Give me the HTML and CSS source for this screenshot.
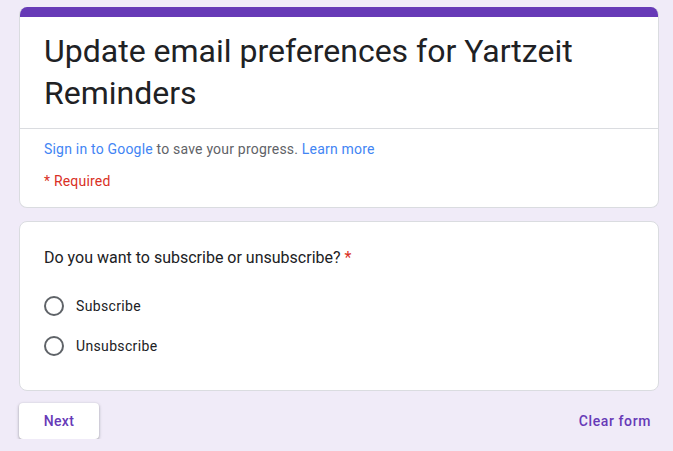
FILE: index.html
```html
<!DOCTYPE html>
<html>
<head>
<meta charset="utf-8">
<link rel="stylesheet" href="styles.css">
</head>
<body>
<div class="page">
  <div class="card header-card">
    <div class="bar"></div>
    <div class="title-wrap">
      <h1 class="title">Update email preferences for Yartzeit Reminders</h1>
    </div>
    <div class="info">
      <div class="signin"><a class="link">Sign in to Google</a> to save your progress. <a class="link">Learn more</a></div>
      <div class="required">* Required</div>
    </div>
  </div>
  <div class="card question-card">
    <div class="question">Do you want to subscribe or unsubscribe? <span class="star">*</span></div>
    <div class="options">
      <div class="option"><span class="radio"></span><span class="label">Subscribe</span></div>
      <div class="option"><span class="radio"></span><span class="label">Unsubscribe</span></div>
    </div>
  </div>
  <div class="actions">
    <button class="next">Next</button>
    <span class="clear">Clear form</span>
  </div>
</div>
</body>
</html>
```
FILE: styles.css
```css
html, body {
  margin: 0;
  padding: 0;
  background: #f0ebf8;
  font-family: Roboto, "Noto Sans", Arial, sans-serif;
  color: #202124;
}
.page {
  width: 640px;
  margin-left: 19px;
  padding-top: 7px;
}
.card {
  background: #fff;
  border: 1px solid #dadce0;
  border-radius: 8px;
  box-sizing: border-box;
}
.header-card {
  border-top: none;
  overflow: hidden;
}
.bar {
  height: 10px;
  background: #673ab7;
  margin: 0 -1px;
}
.title-wrap {
  padding: 13px 24px 14px;
  border-bottom: 1px solid #dadce0;
}
.title {
  margin: 0;
  font-size: 32px;
  font-weight: 400;
  line-height: 42px;
  color: #202124;
}
.info {
  padding: 10px 24px 16px;
  font-size: 14px;
  line-height: 20px;
  letter-spacing: 0.2px;
}
.signin {
  color: #5f6368;
}
.link {
  color: #4285f4;
  text-decoration: none;
}
.required {
  margin-top: 12px;
  color: #d93025;
}
.question-card {
  margin-top: 13px;
  padding: 24px 24px 24px;
}
.question {
  font-size: 16px;
  line-height: 24px;
  color: #202124;
}
.star {
  color: #d93025;
}
.options {
  margin-top: 16px;
  display: flex;
  flex-direction: column;
}
.option {
  display: flex;
  align-items: center;
  height: 40px;
}
.radio {
  width: 20px;
  height: 20px;
  box-sizing: border-box;
  border: 2px solid #5f6368;
  border-radius: 50%;
}
.label {
  margin-left: 12px;
  font-size: 14px;
  color: #202124;
  letter-spacing: 0.35px;
}
.actions {
  margin-top: 12px;
  display: flex;
  justify-content: space-between;
  align-items: center;
}
.next {
  width: 80px;
  height: 36px;
  background: #fff;
  border: none;
  border-radius: 4px;
  box-shadow: 0 1px 2px rgba(60,64,67,0.3), 0 1px 3px 1px rgba(60,64,67,0.15);
  color: #673ab7;
  font-family: Roboto, "Noto Sans", Arial, sans-serif;
  font-size: 14px;
  font-weight: 500;
  letter-spacing: 0.4px;
  padding: 0;
}
.clear {
  color: #673ab7;
  font-size: 14px;
  font-weight: 500;
  letter-spacing: 0.6px;
  margin-right: 8px;
}
```
